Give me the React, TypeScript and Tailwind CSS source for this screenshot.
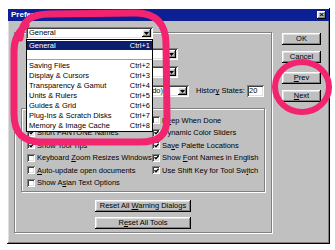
import type { ReactNode } from "react";

// Photoshop "Preferences" dialog (Win classic look) with the General list
// dropped open and two hand-drawn pink marks on top.

const raised =
  "shadow-[inset_-1px_-1px_#000000,inset_1px_1px_#ffffff,inset_-2px_-2px_#808080,inset_2px_2px_#dfdfdf]";
const sunken =
  "shadow-[inset_1px_1px_#808080,inset_-1px_-1px_#ffffff,inset_2px_2px_#404040,inset_-2px_-2px_#dfdfdf]";

function Arrow() {
  return (
    <span className={`flex h-[8px] w-[9px] shrink-0 items-center justify-center bg-[#c0c0c0] ${raised}`}>
      <svg width="5" height="3" viewBox="0 0 5 3">
        <path d="M0 0h5L2.5 3z" fill="#000" />
      </svg>
    </span>
  );
}

function Combo({ text, w, right }: { text: string; w: string; right?: boolean }) {
  return (
    <div className={`flex h-[12px] items-center bg-white pl-[3px] pr-[2px] ${sunken} ${w}`}>
      <span
        className={`flex min-w-0 flex-1 overflow-hidden whitespace-nowrap ${
          right ? "justify-end pr-[15px]" : ""
        }`}
      >
        <span className="shrink-0">{text}</span>
      </span>
      <Arrow />
    </div>
  );
}

function Btn({ children, w = "w-full" }: { children: ReactNode; w?: string }) {
  return (
    <div className={`flex h-[12px] items-center justify-center bg-[#c0c0c0] ${raised} ${w}`}>
      <span className="whitespace-nowrap">{children}</span>
    </div>
  );
}

function U({ children }: { children: ReactNode }) {
  return <span className="underline underline-offset-1">{children}</span>;
}

function Check({ on, children }: { on?: boolean; children: ReactNode }) {
  return (
    <div className="flex h-[12.5px] items-center gap-[2px] whitespace-nowrap">
      <span className={`flex h-[8px] w-[8px] shrink-0 items-center justify-center bg-white ${sunken}`}>
        {on && (
          <svg width="5" height="5" viewBox="0 0 5 5">
            <path d="M0.5 2.2 L2 3.8 L4.6 0.8" stroke="#000" strokeWidth="1.3" fill="none" />
          </svg>
        )}
      </span>
      <span>{children}</span>
    </div>
  );
}

const listItems = [
  ["Saving Files", "Ctrl+2"],
  ["Display & Cursors", "Ctrl+3"],
  ["Transparency & Gamut", "Ctrl+4"],
  ["Units & Rulers", "Ctrl+5"],
  ["Guides & Grid", "Ctrl+6"],
  ["Plug-Ins & Scratch Disks", "Ctrl+7"],
  ["Memory & Image Cache", "Ctrl+8"],
];

export default function App() {
  return (
    <div className="relative h-[250px] w-[335px] overflow-hidden bg-white pl-[7px] pt-[8px] font-['Liberation_Sans',Arial,sans-serif] text-[7.5px] leading-none text-black">
      <div className={`flex h-[236px] w-[323px] flex-col bg-[#c0c0c0] p-[1px] ${raised}`}>
        {/* title bar */}
        <div className="flex h-[12px] items-center justify-between bg-[#0c1f94] pl-[3px] pr-[3px]">
          <span className="text-[8px] font-bold text-white">Preferences</span>
          <span className={`flex h-[8px] w-[9px] items-center justify-center bg-[#c0c0c0] text-[8px] font-bold ${raised}`}>
            ×
          </span>
        </div>

        <div className="flex pl-[6px] pt-[11px]">
          {/* main group */}
          <div className="flex h-[201px] w-[258px] flex-col border border-[#808080] shadow-[1px_1px_0_#ffffff,inset_1px_1px_0_#ffffff]">
            <div className="relative -mt-[6px] ml-[11px] w-[127px]">
              <Combo text="General" w="w-[127px]" />
              <div className="absolute left-0 top-[12px] z-10 flex h-[93px] w-[127px] flex-col border border-black bg-white">
                <div className="mt-[1px] flex h-[9px] items-center justify-between bg-[#0a1e6e] px-[2px] text-white">
                  <span>General</span>
                  <span>Ctrl+1</span>
                </div>
                <div className="h-[9px]" />
                <div className="h-[1px] bg-[#a0a0a0]" />
                <div className="h-[1px]" />
                {listItems.map(([name, key]) => (
                  <div key={name} className="flex h-[10px] items-center justify-between px-[2px]">
                    <span>{name}</span>
                    <span>{key}</span>
                  </div>
                ))}
              </div>
            </div>

            <div className="mt-[9px] flex items-center pl-[13px]">
              <span className="w-[58px]">Color Picker:</span>
              <Combo text="Adobe" w="w-[92px]" />
            </div>
            <div className="mt-[6px] flex items-center pl-[13px]">
              <span className="w-[58px]">Interpolation:</span>
              <Combo text="Bicubic (Better)" w="w-[92px]" />
            </div>
            <div className="mt-[7px] flex items-center pl-[13px]">
              <span className="w-[58px]">Redo Key:</span>
              <Combo text="Ctrl+Z (Toggles Undo/Redo)" w="w-[103px]" right />
              <span className="ml-[7px] w-[51px] whitespace-nowrap">
                Histor<U>y</U> States:
              </span>
              <div className={`flex h-[12px] w-[17px] items-center bg-white pl-[2px] ${sunken}`}>20</div>
            </div>

            {/* options */}
            <div className="ml-[6px] mt-[11px] grid h-[84px] w-[244px] grid-cols-[125px_1fr] content-start border border-[#808080] pl-[5px] pt-[5px] shadow-[1px_1px_0_#ffffff,inset_1px_1px_0_#ffffff]">
              <div className="flex flex-col">
                <Check>Export Clipboard</Check>
                <Check on>Short PANTONE Names</Check>
                <Check on>Show Tool Tips</Check>
                <Check>
                  Keyboard <U>Z</U>oom Resizes Windows
                </Check>
                <Check>
                  <U>A</U>uto-update open documents
                </Check>
                <Check>
                  Show A<U>s</U>ian Text Options
                </Check>
              </div>
              <div className="flex flex-col">
                <Check>
                  B<U>e</U>ep When Done
                </Check>
                <Check on>Dynamic Color Sliders</Check>
                <Check on>
                  Sa<U>v</U>e Palette Locations
                </Check>
                <Check on>
                  Show <U>F</U>ont Names in English
                </Check>
                <Check on>
                  Use Shift Key for Tool Sw<U>i</U>tch
                </Check>
              </div>
            </div>

            <div className="mt-[8px] flex flex-col items-center gap-[5px]">
              <Btn w="w-[96px]">
                Reset All <U>W</U>arning Dialogs
              </Btn>
              <Btn w="w-[96px]">
                R<U>e</U>set All Tools
              </Btn>
            </div>
          </div>

          {/* side buttons */}
          <div className="ml-[10px] mt-[1px] flex w-[39px] flex-col">
            <Btn>OK</Btn>
            <div className="mt-[6px]">
              <Btn>Cancel</Btn>
            </div>
            <div className="mt-[9px]">
              <Btn>
                <U>P</U>rev
              </Btn>
            </div>
            <div className="mt-[6px]">
              <Btn>
                <U>N</U>ext
              </Btn>
            </div>
          </div>
        </div>
      </div>

      {/* hand-drawn pink marks */}
      <svg className="pointer-events-none absolute inset-0" width="335" height="250" viewBox="0 0 335 250">
        <g stroke="#f2246f" strokeWidth="7" fill="none" strokeLinecap="round" strokeLinejoin="round">
          <path d="M20 38 C22 21 30 14 50 14 L136 13 C156 13 166 24 166 44 L167 118 C167 136 158 142 140 142 L42 142 C24 142 14 134 14 114 L14 52 C14 42 16 34 26 25" />
          <ellipse cx="302" cy="87" rx="27" ry="25" strokeWidth="6" />
        </g>
      </svg>
    </div>
  );
}
